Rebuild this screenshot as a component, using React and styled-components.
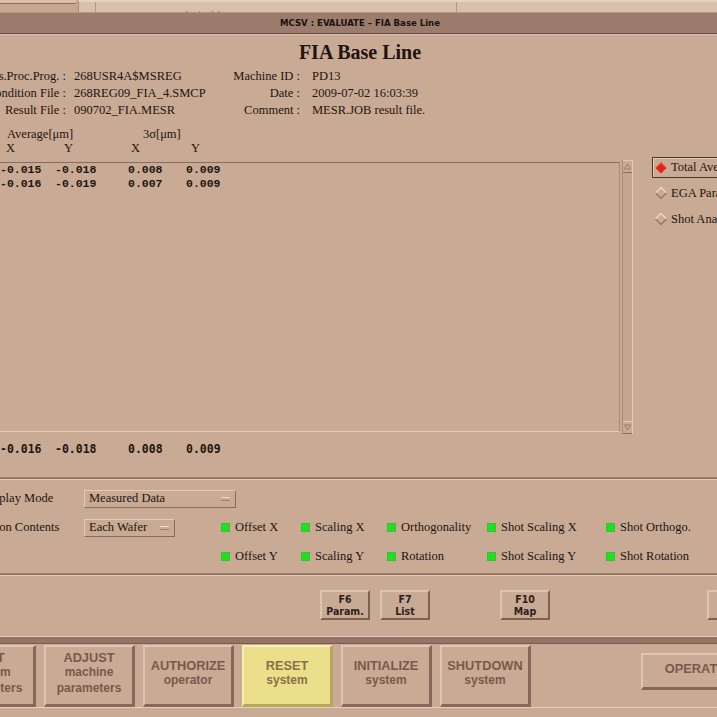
import React from 'react';
import styled, { createGlobalStyle } from 'styled-components';

const tan = '#c9aa94';
const hilite = '#e2cbb9';
const shade = '#8b6b5c';
const serif = '"Liberation Serif", "Times New Roman", serif';
const narrow = '"DejaVu Sans Condensed", "DejaVu Sans", "Liberation Sans Narrow", sans-serif';
const sans = '"Liberation Sans", Arial, sans-serif';

const Global = createGlobalStyle`
  html, body { margin: 0; padding: 0; background: ${tan}; overflow: hidden; }
  #root { width: 717px; height: 717px; overflow: hidden; }
`;

const Screen = styled.div`
  width: 717px;
  height: 717px;
  overflow: hidden;
  display: flex;
  flex-direction: column;
  background: ${tan};
  color: #1f140f;
`;

/* bit of the desktop showing above the window */
const Backdrop = styled.div`
  flex: none;
  height: 12px;
  display: flex;
  background: #c6a691;
`;
const BackEdge = styled.div`
  width: 76px;
  height: 3px;
  background: #d9c0ad;
  border-bottom: 1px solid ${shade};
`;
const BackFrame = styled.div`
  flex: 1;
  margin-left: 2px;
  display: flex;
  background: #d8c0ad;
  border-left: 1px solid #a68878;
  border-top: 2px solid #e6d2c3;
`;
const BackInset = styled.div`
  flex: 1;
  margin-left: 16px;
  border-left: 1px solid #b39887;
  border-right: 1px solid #b39887;
  max-width: 270px;
  font: 8px ${narrow};
  color: #6d5246;
  padding: 3px 0 0 90px;
  letter-spacing: 4px;
`;

const Window = styled.div`
  flex: 1;
  display: flex;
  flex-direction: column;
  width: 880px;
  margin-left: -80px;
`;

const TitleBar = styled.div`
  height: 20px;
  line-height: 20px;
  background: #9c7c6d;
  border-top: 1px solid #b4937f;
  border-bottom: 1px solid #5e463b;
  text-align: center;
  font-family: ${narrow};
  font-stretch: condensed;
  font-weight: bold;
  font-size: 9.5px;
  color: #1b110d;
`;

const Body = styled.div`
  flex: 1;
  display: flex;
  flex-direction: column;
  border-top: 1px solid #dcc3b1;
  font-family: ${serif};
  font-size: 12.5px;
`;

const Heading = styled.h1`
  margin: 5px 0 0;
  text-align: center;
  font-family: ${serif};
  font-size: 20px;
  line-height: 24px;
  font-weight: bold;
`;

const InfoGrid = styled.div`
  margin-top: 4px;
  display: grid;
  grid-template-columns: 146px 160px 74px 1fr;
  grid-auto-rows: 17px;
  line-height: 17px;
  white-space: nowrap;
`;
const InfoLabel = styled.span`
  text-align: right;
`;
const InfoValue = styled.span`
  padding-left: ${p => p.$pad}px;
`;

const StatGrid = styled.div`
  margin-top: 8px;
  display: grid;
  grid-template-columns: 80px 53px 75px 58px 1fr;
  grid-auto-rows: 14px;
  line-height: 14px;
  white-space: nowrap;
`;
const StatHead = styled.span`
  grid-column: ${p => p.$col};
  padding-left: ${p => p.$pad}px;
`;

const Panel = styled.div`
  margin-top: 2px;
  display: flex;
  align-items: flex-start;
`;

const ListBox = styled.div`
  margin-top: 5px;
  width: 700px;
  height: 270px;
  box-sizing: border-box;
  border-top: 1px solid ${shade};
  border-right: 1px solid #a98b7a;
  border-bottom: 1px solid ${hilite};
`;

const DataRow = styled.div`
  display: grid;
  grid-template-columns: 80px 55px 73px 58px 1fr;
  height: 14px;
  line-height: 14px;
  margin-top: ${p => p.$top || 0}px;
  font-family: ${p => (p.$sans ? '"DejaVu Sans Mono"' : '"Liberation Mono"')}, monospace;
  font-weight: bold;
  font-size: 11.5px;
  color: #22150f;
  white-space: pre;
`;

const ScrollBar = styled.div`
  margin: 3px 0 0 2px;
  width: 11px;
  height: 274px;
  box-sizing: border-box;
  display: flex;
  flex-direction: column;
  justify-content: space-between;
  border-left: 1px solid #a98b7a;
  border-right: 1px solid ${hilite};
  background: #c4a590;
`;
const ScrollArrow = styled.div`
  height: 11px;
  display: flex;
  align-items: center;
  justify-content: center;
  border-top: 1px solid ${hilite};
  border-bottom: 1px solid ${shade};
  background: ${tan};
`;

const RadioGroup = styled.div`
  margin-left: 19px;
  display: flex;
  flex-direction: column;
  white-space: nowrap;
`;
const RadioItem = styled.div`
  display: flex;
  align-items: center;
  gap: 4px;
  height: ${p => (p.$on ? 19 : 24)}px;
  padding: 0 3px 0 2px;
  border: 1px solid ${p => (p.$on ? '#4a372e' : 'transparent')};
  box-shadow: ${p => (p.$on ? `inset 1px 1px 0 ${hilite}` : 'none')};
  margin-bottom: ${p => (p.$on ? 2 : 0)}px;
`;

const Divider = styled.div`
  flex: none;
  margin-top: ${p => p.$top || 0}px;
  height: 1px;
  background: #8a6a5b;
  border-top: 1px solid #a3826f;
  border-bottom: 1px solid ${hilite};
`;

const Controls = styled.div`
  padding: 4px 0 0 62px;
  display: grid;
  grid-template-columns: 102px 137px 1fr;
  grid-template-rows: repeat(3, 29px);
  align-items: center;
  white-space: nowrap;
`;
const FieldLabel = styled.span`
  margin-left: ${p => p.$shift || 0}px;
`;
const Dropdown = styled.div`
  width: ${p => p.$w}px;
  height: 18px;
  box-sizing: border-box;
  display: flex;
  align-items: center;
  padding-left: 4px;
  border-top: 1px solid ${hilite};
  border-left: 1px solid ${hilite};
  border-bottom: 1px solid ${shade};
  border-right: 1px solid ${shade};
`;
const Notch = styled.span`
  margin: 0 5px 0 auto;
  width: 9px;
  height: 2px;
  border-top: 1px solid #eddccf;
  border-bottom: 1px solid #9d7f70;
`;
const CheckGrid = styled.div`
  grid-column: 3;
  grid-row: 2 / span 2;
  align-self: stretch;
  display: grid;
  grid-template-columns: 80px 86px 100px 119px 1fr;
  grid-auto-rows: 29px;
  align-items: center;
`;
const Check = styled.span`
  display: flex;
  align-items: center;
  gap: 5px;
`;
const Lamp = styled.span`
  width: 9px;
  height: 9px;
  box-sizing: border-box;
  background: #1fe21f;
  border: 1px solid #3dbd35;
`;

const FKeyBar = styled.div`
  flex: none;
  height: 60px;
  box-sizing: border-box;
  padding: 14px 0 0 400px;
  display: flex;
  gap: 10px;
`;
const Gap = styled.div`
  flex: none;
  width: ${p => p.$w}px;
`;
const FKey = styled.div`
  flex: none;
  width: 50px;
  height: 30px;
  box-sizing: border-box;
  display: flex;
  flex-direction: column;
  align-items: center;
  justify-content: center;
  border: 2px solid;
  border-color: #dcc4b2 #7e6052 #7e6052 #dcc4b2;
  font-family: ${narrow};
  font-stretch: condensed;
  font-weight: bold;
  font-size: 10.5px;
  line-height: 12px;
  color: #2e2019;
`;

const Band = styled.div`
  flex: none;
  height: 6px;
  background: #957465;
  border-top: 1px solid ${hilite};
  border-bottom: 1px solid #7a5d50;
`;

const ButtonRow = styled.div`
  flex: none;
  height: 64px;
  box-sizing: border-box;
  padding: 1px 0 0 25px;
  display: flex;
  gap: 8px;
  border-bottom: 1px solid #e6d2c2;
`;
const BigButton = styled.div`
  flex: none;
  width: ${p => p.$w || 91}px;
  height: ${p => p.$h || 62}px;
  margin-top: ${p => p.$top || 0}px;
  box-sizing: border-box;
  display: flex;
  flex-direction: column;
  align-items: center;
  justify-content: center;
  padding-bottom: 5px;
  background: ${p => (p.$lit ? '#ecdf8b' : tan)};
  border: 2px solid;
  border-width: 2px 3px 3px 2px;
  border-color: ${p =>
    p.$lit ? '#f6eeb2 #b8a658 #b8a658 #f6eeb2' : '#dec6b4 #86675a #86675a #dec6b4'};
  font-family: ${sans};
  font-weight: bold;
  color: ${p => (p.$lit ? '#8b7046' : '#79594d')};
  text-align: center;
  white-space: nowrap;
`;
const BigLine = styled.span`
  font-size: ${p => (p.$main ? 12.8 : 12)}px;
  line-height: 15.5px;
`;

function Diamond({ on }) {
  return (
    <svg width="12" height="12" viewBox="0 0 12 12">
      {on ? (
        <>
          <polygon points="6,0.5 11.5,6 6,11.5 0.5,6" fill="#e3221b" />
          <polyline points="0.5,6 6,0.5 11.5,6" fill="none" stroke="#f05a4c" strokeWidth="1" />
        </>
      ) : (
        <>
          <polyline points="0.5,6 6,0.5 11.5,6" fill="none" stroke="#ecdacd" strokeWidth="1.2" />
          <polyline points="0.5,6 6,11.5 11.5,6" fill="none" stroke="#8f7365" strokeWidth="1.2" />
        </>
      )}
    </svg>
  );
}

function Arrow({ down }) {
  return (
    <svg width="7" height="7" viewBox="0 0 7 7">
      <polygon
        points={down ? '0.5,1 6.5,1 3.5,6' : '0.5,6 6.5,6 3.5,1'}
        fill="none"
        stroke="#9a7c6d"
        strokeWidth="1"
      />
    </svg>
  );
}

const info = [
  ['Meas.Proc.Prog. :', '268USR4A$MSREG', 'Machine ID :', 'PD13'],
  ['Condition File :', '268REG09_FIA_4.SMCP', 'Date :', '2009-07-02 16:03:39'],
  ['Result File :', '090702_FIA.MESR', 'Comment :', 'MESR.JOB result file.'],
];

const rows = [
  ['-0.015', '-0.018', '0.008', '0.009'],
  ['-0.016', '-0.019', '0.007', '0.009'],
];

const total = ['-0.016', '-0.018', '0.008', '0.009'];

const checks = [
  'Offset X', 'Scaling X', 'Orthogonality', 'Shot Scaling X', 'Shot Orthogo.',
  'Offset Y', 'Scaling Y', 'Rotation', 'Shot Scaling Y', 'Shot Rotation',
];

const actions = [
  ['EDIT', 'system', 'parameters'],
  ['ADJUST', 'machine', 'parameters'],
  ['AUTHORIZE', 'operator'],
  ['RESET', 'system'],
  ['INITIALIZE', 'system'],
  ['SHUTDOWN', 'system'],
];

export default function App() {
  return (
    <Screen>
      <Global />
      <Backdrop>
        <BackEdge />
        <BackFrame>
          <BackInset>. . ..</BackInset>
        </BackFrame>
      </Backdrop>

      <Window>
        <TitleBar>MCSV : EVALUATE – FIA Base Line</TitleBar>
        <Body>
          <Heading>FIA Base Line</Heading>

          <InfoGrid>
            {info.map(([l1, v1, l2, v2]) => (
              <React.Fragment key={l1}>
                <InfoLabel>{l1}</InfoLabel>
                <InfoValue $pad={8}>{v1}</InfoValue>
                <InfoLabel>{l2}</InfoLabel>
                <InfoValue $pad={12}>{v2}</InfoValue>
              </React.Fragment>
            ))}
          </InfoGrid>

          <StatGrid>
            <StatHead $col="2 / span 2" $pad={7}>Average[μm]</StatHead>
            <StatHead $col="4 / span 2" $pad={15}>3σ[μm]</StatHead>
            <StatHead $col="2" $pad={6}>X</StatHead>
            <StatHead $col="3" $pad={11}>Y</StatHead>
            <StatHead $col="4" $pad={3}>X</StatHead>
            <StatHead $col="5" $pad={5}>Y</StatHead>
          </StatGrid>

          <Panel>
            <ListBox>
              {rows.map((r, i) => (
                <DataRow key={i}>
                  <span />
                  {r.map((v, j) => (
                    <span key={j}>{v}</span>
                  ))}
                </DataRow>
              ))}
            </ListBox>
            <ScrollBar>
              <ScrollArrow><Arrow /></ScrollArrow>
              <ScrollArrow><Arrow down /></ScrollArrow>
            </ScrollBar>
            <RadioGroup>
              <RadioItem $on><Diamond on />Total Average</RadioItem>
              <RadioItem><Diamond />EGA Parameter</RadioItem>
              <RadioItem><Diamond />Shot Analysis</RadioItem>
            </RadioGroup>
          </Panel>

          <DataRow $sans $top={8}>
            <span />
            {total.map((v, j) => (
              <span key={j}>{v}</span>
            ))}
          </DataRow>

          <Divider $top={21} />

          <Controls>
            <FieldLabel>Display Mode</FieldLabel>
            <Dropdown $w={152}>Measured Data<Notch /></Dropdown>
            <span />
            <FieldLabel $shift={-5}>Option Contents</FieldLabel>
            <Dropdown $w={91}>Each Wafer<Notch /></Dropdown>
            <CheckGrid>
              {checks.map(c => (
                <Check key={c}><Lamp />{c}</Check>
              ))}
            </CheckGrid>
            <span />
          </Controls>

          <Divider $top={2} />

          <FKeyBar>
            <FKey><span>F6</span><span>Param.</span></FKey>
            <FKey><span>F7</span><span>List</span></FKey>
            <Gap $w={50} />
            <FKey><span>F10</span><span>Map</span></FKey>
            <Gap $w={137} />
            <FKey><span>F12</span><span>Exit</span></FKey>
          </FKeyBar>

          <Band />

          <ButtonRow>
            {actions.map(([head, ...rest]) => (
              <BigButton key={head} $lit={head === 'RESET'}>
                <BigLine $main>{head}</BigLine>
                {rest.map(t => (
                  <BigLine key={t}>{t}</BigLine>
                ))}
              </BigButton>
            ))}
            <Gap $w={94} />
            <BigButton $w={120} $h={37} $top={8}>
              <BigLine $main>OPERATOR</BigLine>
            </BigButton>
          </ButtonRow>
        </Body>
      </Window>
    </Screen>
  );
}
